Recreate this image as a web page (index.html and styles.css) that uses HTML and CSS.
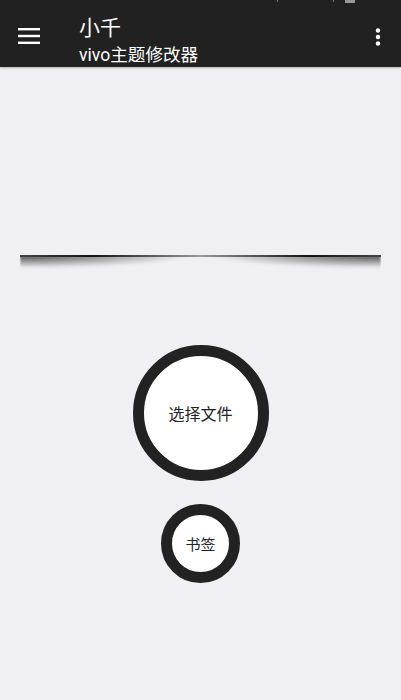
FILE: index.html
```html
<!DOCTYPE html>
<html lang="zh">
<head>
<meta charset="utf-8">
<title>小千 vivo主题修改器</title>
<link rel="stylesheet" href="styles.css">
</head>
<body>
<header class="appbar">
  <div class="status">
    <span class="tick t1"></span>
    <span class="tick t2"></span>
    <span class="batt"></span>
  </div>
  <button class="icon-btn menu" aria-label="菜单">
    <svg width="22" height="16" viewBox="0 0 22 16"><rect x="0" y="0" width="22" height="2.4" fill="#fff"/><rect x="0" y="6.8" width="22" height="2.4" fill="#fff"/><rect x="0" y="13.6" width="22" height="2.4" fill="#fff"/></svg>
  </button>
  <div class="titles">
    <div class="title">小千</div>
    <div class="subtitle">vivo主题修改器</div>
  </div>
  <button class="icon-btn more" aria-label="更多">
    <svg width="6" height="18" viewBox="0 0 6 18"><circle cx="3" cy="2.5" r="2.2" fill="#fff"/><circle cx="3" cy="9" r="2.2" fill="#fff"/><circle cx="3" cy="15.5" r="2.2" fill="#fff"/></svg>
  </button>
</header>
<main class="content">
  <div class="lifted"></div>
  <div class="actions">
    <button class="ring big">选择文件</button>
    <button class="ring small">书签</button>
  </div>
</main>
</body>
</html>
```

FILE: styles.css
```css
html, body {
  margin: 0;
  padding: 0;
}
body {
  background: #efeff4;
  font-family: "Roboto", "Noto Sans CJK SC", sans-serif;
  width: 401px;
  height: 700px;
  overflow: hidden;
}
.appbar {
  position: relative;
  height: 67px;
  background: #212121;
  display: flex;
  align-items: center;
  box-shadow: 0 1px 2px rgba(0,0,0,0.25);
  color: #fff;
}
.status {
  position: absolute;
  top: 0;
  left: 0;
  right: 0;
  height: 4px;
}
.tick {
  position: absolute;
  top: 0;
  width: 1px;
  height: 2px;
  background: #777;
}
.t1 { left: 277px; }
.t2 { left: 333px; }
.batt {
  position: absolute;
  top: 0;
  left: 345px;
  width: 10px;
  height: 3px;
  background: #999;
}
.icon-btn {
  background: none;
  border: 0;
  padding: 0;
  display: flex;
  align-items: center;
  justify-content: center;
}
.menu {
  width: 22px;
  margin-left: 18px;
  margin-top: 4px;
}
.titles {
  margin-left: 39px;
  flex: 1;
  display: flex;
  flex-direction: column;
  gap: 4px;
  margin-top: 13px;
}
.title {
  font-size: 21px;
  line-height: 26px;
  font-family: "Noto Sans CJK SC", sans-serif;
}
.subtitle {
  font-size: 17.6px;
  line-height: 24px;
}
.more {
  width: 6px;
  margin-right: 20px;
  margin-top: 6px;
}
.content {
  display: flex;
  flex-direction: column;
  align-items: center;
}
.lifted {
  position: relative;
  margin-top: 188px;
  width: 361px;
  height: 20px;
  overflow: hidden;
}
.lifted::before {
  content: "";
  position: absolute;
  left: 0;
  right: 0;
  top: 0;
  height: 1.5px;
  background: linear-gradient(to right, #444 0%, #111 20%, #999 50%, #111 80%, #444 100%);
  z-index: 2;
}
.lifted::after {
  content: "";
  position: absolute;
  left: 0;
  right: 0;
  top: 0;
  bottom: 0;
  background:
    radial-gradient(ellipse 170px 13px at 0 0, rgba(0,0,0,0.7), rgba(0,0,0,0.35) 50%, rgba(0,0,0,0) 100%),
    radial-gradient(ellipse 170px 13px at 100% 0, rgba(0,0,0,0.7), rgba(0,0,0,0.35) 50%, rgba(0,0,0,0) 100%);
  filter: blur(1.5px);
}
.actions {
  display: flex;
  flex-direction: column;
  align-items: center;
  gap: 23px;
  margin-top: 70px;
}
.ring {
  box-sizing: border-box;
  border-radius: 50%;
  border-style: solid;
  border-color: #222;
  background: #fff;
  color: #222;
  font-family: "Noto Sans CJK SC", sans-serif;
  padding: 0;
  display: flex;
  align-items: center;
  justify-content: center;
}
.big {
  width: 136px;
  height: 136px;
  border-width: 11px;
  font-size: 16px;
}
.small {
  width: 79px;
  height: 79px;
  border-width: 11px;
  font-size: 15px;
}
```
